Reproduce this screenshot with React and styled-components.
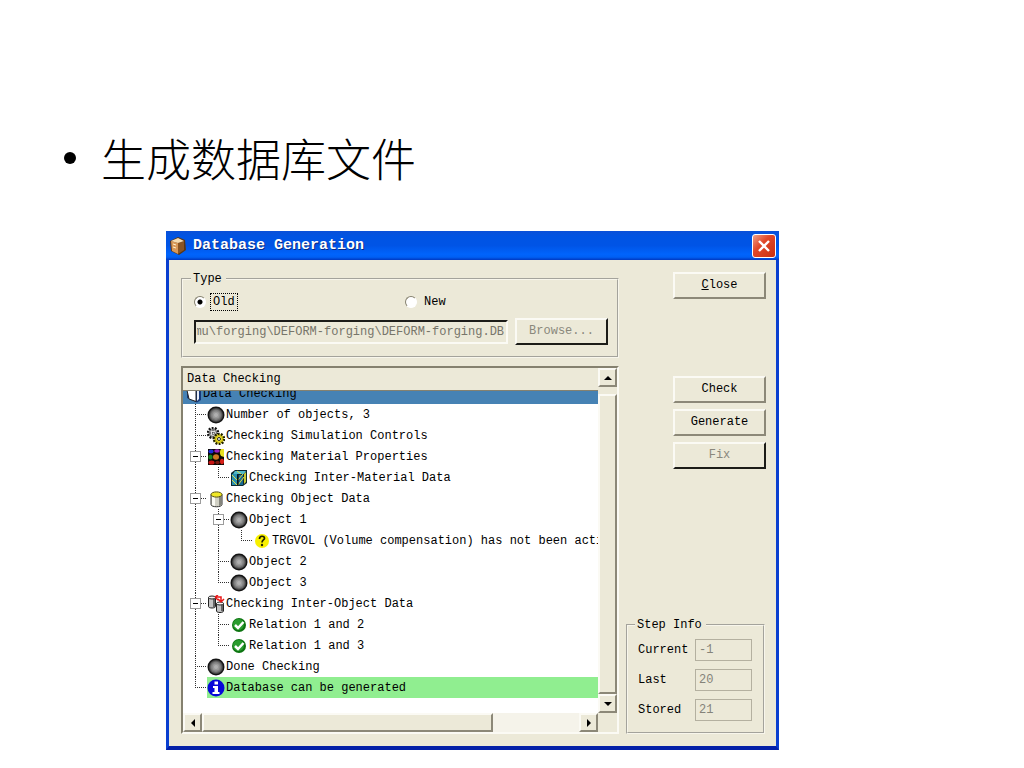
import React, { useLayoutEffect, useRef } from 'react';
import styled, { createGlobalStyle, css } from 'styled-components';

const GlobalStyle = createGlobalStyle`
  * {
    box-sizing: border-box;
  }

  body {
    margin: 0;
    background: #ffffff;
    color: #000000;
    font-family: 'Liberation Mono', 'Noto Sans CJK SC', monospace;
    font-size: 12px;
    line-height: 14px;
  }
`;

const treeRows = [
  { guides: [], icon: 'book', label: 'Data Checking', tone: 'blue' },
  { guides: ['tee'], icon: 'ball', label: 'Number of objects, 3' },
  { guides: ['tee'], icon: 'gears', label: 'Checking Simulation Controls' },
  { guides: ['box'], icon: 'material', label: 'Checking Material Properties' },
  { guides: ['line', 'elbow'], icon: 'interMaterial', label: 'Checking Inter-Material Data' },
  { guides: ['box'], icon: 'cylinder', label: 'Checking Object Data' },
  { guides: ['line', 'box'], icon: 'ball', label: 'Object 1' },
  {
    guides: ['line', 'line', 'elbow'],
    icon: 'question',
    label: 'TRGVOL (Volume compensation) has not been activated',
  },
  { guides: ['line', 'tee'], icon: 'ball', label: 'Object 2' },
  { guides: ['line', 'elbow'], icon: 'ball', label: 'Object 3' },
  { guides: ['box'], icon: 'interObject', label: 'Checking Inter-Object Data' },
  { guides: ['line', 'tee'], icon: 'check', label: 'Relation 1 and 2' },
  { guides: ['line', 'elbow'], icon: 'check', label: 'Relation 1 and 3' },
  { guides: ['tee'], icon: 'ball', label: 'Done Checking' },
  { guides: ['elbow'], icon: 'info', label: 'Database can be generated', tone: 'green' },
];

const stepFields = [
  { id: 'current', label: 'Current', value: '-1' },
  { id: 'last', label: 'Last', value: '20' },
  { id: 'stored', label: 'Stored', value: '21' },
];

const icons = {
  book: (
    <>
      <path d="M3 1h11l3 3v11l-4 2.500L3 13z" fill="#16387a" />
      <path d="M2 1h10v15.500L5 14z" fill="#ffffff" stroke="#222222" />
      <path d="M13 3l2 2v9l-2 2z" fill="#e8eef8" />
    </>
  ),
  ball: (
    <>
      <circle cx="9" cy="9" r="8.5" fill="#141414" />
      <circle cx="9" cy="9" r="7" fill="#484848" />
      <circle cx="9" cy="9" r="6" fill="#686868" />
      <circle cx="9" cy="9" r="5" fill="#828282" />
      <circle cx="9" cy="9" r="3.5" fill="#9a9a9a" />
      <circle cx="9" cy="9" r="2" fill="#b0b0b0" />
    </>
  ),
  gears: (
    <>
      <circle cx="6" cy="6" r="5" fill="#c8c8c8" stroke="#111111" strokeWidth="2.6" strokeDasharray="1.8 1.3" />
      <circle cx="6" cy="6" r="3.5" fill="#e0e0e0" stroke="#666666" />
      <path d="M6 3v6M3 6h6" stroke="#222222" strokeDasharray="1 1" />
      <circle cx="12" cy="12" r="5" fill="#f0e020" stroke="#222200" strokeWidth="2.6" strokeDasharray="1.8 1.3" />
      <circle cx="12" cy="12" r="3.5" fill="#f3e62a" stroke="#b8ac14" />
      <circle cx="12" cy="12" r="1.5" fill="#ffffff" stroke="#222222" />
    </>
  ),
  material: (
    <>
      <path d="M1 1h16v16H1z" fill="#0c0804" />
      <ellipse cx="4" cy="3.5" rx="2.6" ry="2" fill="#1a30d8" />
      <ellipse cx="10" cy="3" rx="2.8" ry="1.800" fill="#9820c0" />
      <path d="M14 1h3v8l-3-1c-1.500-2-1.500-5 0-7z" fill="#e8e020" />
      <ellipse cx="3.500" cy="9" rx="2.200" ry="2.600" fill="#188820" />
      <ellipse cx="9" cy="9" rx="3" ry="2.800" fill="#d07820" />
      <ellipse cx="4.500" cy="14.500" rx="3" ry="2" fill="#c81414" />
      <ellipse cx="10.500" cy="14.500" rx="2.200" ry="1.800" fill="#7c1810" />
      <ellipse cx="15" cy="13.500" rx="2" ry="2.800" fill="#d82018" />
    </>
  ),
  interMaterial: (
    <>
      <path d="M1 4l4-3h12v13l-4 3H1z" fill="#0c2830" />
      <path d="M2 5h5v11H2z" fill="#2890b0" />
      <path d="M5 2h11l-2 3H3z" fill="#50b8c8" />
      <path d="M8 6h5v10H8z" fill="#186890" />
      <path d="M14 5l2-2v10l-2 2z" fill="#c8c830" />
      <path d="M2 6l5 5M2 11l5 5M8 16l6-8M8 11l5-6M7 2l4 3" stroke="#e0dc40" fill="none" />
      <path d="M8 6v10" stroke="#000000" />
    </>
  ),
  cylinder: (
    <>
      <path d="M4 4.500v10c0 3 11 3 11 0v-10z" fill="#d0d0c4" stroke="#333333" />
      <path d="M5 6h3v10l-3-1z" fill="#fafaf4" />
      <path d="M12 6h2v9l-2 1z" fill="#85857c" />
      <ellipse cx="9.500" cy="4.500" rx="5.500" ry="2.600" fill="#f0e828" stroke="#55500c" />
    </>
  ),
  question: (
    <>
      <circle cx="9" cy="9" r="7" fill="#f8f000" />
      <path d="M6.500 7c0-3.500 5-3.500 5-.8C11.500 8 9 8 9 10.500" stroke="#222200" strokeWidth="1.7" fill="none" />
      <circle cx="9" cy="13" r="1.200" fill="#222200" />
    </>
  ),
  interObject: (
    <>
      <path d="M1.500 2.500v9c0 2 7 2 7 0v-9z" fill="#c4c4c4" stroke="#222222" />
      <path d="M6 4h2v8H6z" fill="#666666" />
      <ellipse cx="5" cy="2.500" rx="3.500" ry="1.500" fill="#f4f4f4" stroke="#222222" />
      <path d="M9.500 8.500v7.500c0 2 7 2 7 0V8.500z" fill="#c4c4c4" stroke="#222222" />
      <path d="M14 10h2v6h-2z" fill="#666666" />
      <ellipse cx="13" cy="8.500" rx="3.500" ry="1.500" fill="#f4f4f4" stroke="#222222" />
      <path d="M8 2h6v4M8 2l3-2M8 2l3 3M14 7l-3-3M14 7l3-3" stroke="#e81818" strokeWidth="1.500" fill="none" />
    </>
  ),
  check: (
    <>
      <circle cx="9" cy="9" r="7" fill="#0c7410" />
      <circle cx="8.500" cy="8.500" r="5.500" fill="#2a9c2e" />
      <path d="M5 9l3 3 5.500-6" stroke="#ffffff" strokeWidth="2.500" fill="none" />
    </>
  ),
  info: (
    <>
      <circle cx="9" cy="9" r="8.500" fill="#0808d8" />
      <path d="M7.500 2.500h3.500v3H7.500zM6 7h5v6h1.500v2h-7v-2H7.500V9H6z" fill="#ffffff" />
    </>
  ),
};

const guideLines = {
  line: 'M11.5 0V21',
  tee: 'M11.5 0V21M11 10.5H23',
  box: 'M11.5 0V21M17 10.5H23',
  elbow: 'M11.5 0V11M11 10.5H23',
};

const Guide = ({ kind }) => (
  <GuideSvg viewBox="0 0 23 21" aria-hidden="true">
    <path d={guideLines[kind]} stroke="#303030" strokeDasharray="1 1" fill="none" />
    {kind === 'box' && (
      <>
        <rect x="6.5" y="5.5" width="10" height="10" fill="#ffffff" stroke="#9c9c9c" />
        <path d="M9 10.5h5" stroke="#000000" />
      </>
    )}
  </GuideSvg>
);

const Arrow = ({ direction }) => {
  const shapes = {
    up: 'M0 6h8L4 2z',
    down: 'M0 2h8L4 6z',
    left: 'M6 0v8L2 4z',
    right: 'M2 0v8l4-4z',
  };
  return (
    <svg width="8" height="8" viewBox="0 0 8 8" aria-hidden="true">
      <path d={shapes[direction]} fill="#000000" />
    </svg>
  );
};

const App = () => {
  const pathRef = useRef(null);

  // keep the file name at the end of the path in view
  useLayoutEffect(() => {
    pathRef.current.scrollLeft = pathRef.current.scrollWidth;
  }, []);

  return (
    <>
      <GlobalStyle />
      <Slide>
        <Bullet>生成数据库文件</Bullet>
        <Dialog role="dialog" aria-labelledby="dialog-title">
          <TitleBar>
            <TitleIcon viewBox="0 0 18 18" aria-hidden="true">
              <path d="M1 4l8-4 7 3 1 10-7 5-8-4z" fill="#5a3614" />
              <path d="M2 4l7 2v11l-6-3z" fill="#d89858" />
              <path d="M9 6l6-2v9l-6 4z" fill="#8a5524" />
              <path d="M2 4l7-3 6 3-6 2z" fill="#f6dcb0" />
              <path d="M4 7l3 1M4 10l3 1" stroke="#fff0cc" />
            </TitleIcon>
            <Title id="dialog-title">Database Generation</Title>
            <TitleClose type="button" aria-label="Close window">
              <svg width="14" height="14" viewBox="0 0 14 14" aria-hidden="true">
                <path d="M2 2l10 10M12 2L2 12" stroke="#ffffff" strokeWidth="2.4" />
              </svg>
            </TitleClose>
          </TitleBar>

          <Client>
            <MainColumn>
              <Group>
                <Legend>Type</Legend>
                <RadioRow>
                  <RadioLabel>
                    <Radio type="radio" name="type" defaultChecked />
                    <RadioText $focused>Old</RadioText>
                  </RadioLabel>
                  <RadioLabel>
                    <Radio type="radio" name="type" />
                    <RadioText>New</RadioText>
                  </RadioLabel>
                </RadioRow>
                <PathRow>
                  <PathInput
                    ref={pathRef}
                    aria-label="Database path"
                    defaultValue="simu\forging\DEFORM-forging\DEFORM-forging.DB"
                    disabled
                  />
                  <Button type="button" disabled>Browse...</Button>
                </PathRow>
              </Group>

              <TreeFrame>
                <TreePane>
                  <TreeHeader>Data Checking</TreeHeader>
                  <TreeBody>
                    <TreeList>
                      {treeRows.map((row) => (
                        <TreeRow key={row.label} $tone={row.guides.length ? undefined : row.tone}>
                          {row.guides.map((kind, i) => (
                            <Guide key={i} kind={kind} />
                          ))}
                          <TreeItem $tone={row.tone}>
                            <ItemIcon viewBox="0 0 18 18" aria-hidden="true">{icons[row.icon]}</ItemIcon>
                            {row.label}
                          </TreeItem>
                        </TreeRow>
                      ))}
                    </TreeList>
                  </TreeBody>
                  <HorizontalBar>
                    <ScrollButton type="button" aria-label="Scroll left"><Arrow direction="left" /></ScrollButton>
                    <HorizontalThumb />
                    <ScrollButton type="button" aria-label="Scroll right"><Arrow direction="right" /></ScrollButton>
                  </HorizontalBar>
                </TreePane>
                <VerticalBar>
                  <ScrollButton type="button" aria-label="Scroll up"><Arrow direction="up" /></ScrollButton>
                  <VerticalThumb />
                  <ScrollButton type="button" aria-label="Scroll down"><Arrow direction="down" /></ScrollButton>
                </VerticalBar>
              </TreeFrame>
            </MainColumn>

            <SideColumn>
              <Button type="button"><u>C</u>lose</Button>
              <Actions>
                <Button type="button">Check</Button>
                <Button type="button">Generate</Button>
                <Button type="button" disabled>Fix</Button>
              </Actions>
              <StepGroup>
                <Legend>Step Info</Legend>
                <StepGrid>
                  {stepFields.map((field) => (
                    <React.Fragment key={field.id}>
                      <label htmlFor={field.id}>{field.label}</label>
                      <StepInput id={field.id} defaultValue={field.value} disabled />
                    </React.Fragment>
                  ))}
                </StepGrid>
              </StepGroup>
            </SideColumn>
          </Client>
        </Dialog>
      </Slide>
    </>
  );
};

const raised = css`
  border: 2px solid;
  border-color: #fbfaf4 #8c8878 #8c8878 #fbfaf4;
  background: #ece9d8;
`;

const Slide = styled.main`
  padding: 128px 245px 18px 166px;
`;

const Bullet = styled.h1`
  display: flex;
  align-items: center;
  gap: 25px;
  margin: 0 0 43px -102px;
  font-family: 'Noto Sans CJK SC', sans-serif;
  font-size: 45px;
  font-weight: 300;
  line-height: 60px;
  white-space: nowrap;

  &::before {
    content: '';
    width: 12px;
    height: 12px;
    border-radius: 50%;
    background: #000000;
  }
`;

const Dialog = styled.section`
  border: solid #0a3fd0;
  border-width: 0 3px 4px;
  border-bottom-color: #0420a8;
  background: #ece9d8;
`;

const TitleBar = styled.header`
  display: flex;
  align-items: center;
  gap: 6px;
  height: 29px;
  margin: 0 -3px;
  padding: 0 3px;
  background: linear-gradient(#0a50d8, #0054e3 20%, #0054e6 50%, #0064fc 80%, #0060f4 90%, #0038c0);
`;

const TitleIcon = styled.svg`
  width: 18px;
  height: 18px;
`;

const Title = styled.h2`
  flex: 1;
  margin: 0;
  color: #ffffff;
  font-size: 15px;
  font-weight: 700;
  line-height: 18px;
  text-shadow: 1px 1px 0 #0a2a80;
`;

const TitleClose = styled.button`
  display: flex;
  align-items: center;
  justify-content: center;
  width: 24px;
  height: 24px;
  padding: 0;
  border: 1px solid #ffffff;
  border-radius: 3px;
  background: linear-gradient(135deg, #f0a088, #e0482a 40%, #c83010);
`;

const Client = styled.div`
  display: flex;
  gap: 7px;
  padding: 12px 10px 12px 12px;
`;

const MainColumn = styled.div`
  display: flex;
  flex: 1;
  flex-direction: column;
  gap: 8px;
  min-width: 0;
`;

const SideColumn = styled.div`
  display: flex;
  flex-direction: column;
  align-items: flex-end;
  width: 140px;
`;

const Group = styled.fieldset`
  min-width: 0;
  margin: 0;
  padding: 7px 9px 11px 11px;
  border: 2px groove #f8f6ec;
`;

const StepGroup = styled(Group)`
  align-self: stretch;
  margin: auto 1px 0 0;
  padding: 7px 11px 11px 10px;
`;

const Legend = styled.legend`
  margin-left: -3px;
  padding: 0 4px 0 2px;
`;

const RadioRow = styled.div`
  display: grid;
  grid-template-columns: 1fr 1fr;
  gap: 8px;
`;

const RadioLabel = styled.label`
  display: flex;
  align-items: center;
  gap: 4px;
`;

const Radio = styled.input`
  appearance: none;
  width: 12px;
  height: 12px;
  margin: 0;
  border: 1px solid;
  border-color: #85816f #ffffff #ffffff #85816f;
  border-radius: 50%;
  background: #ffffff;

  &:checked {
    background: radial-gradient(circle, #000000 2px, #ffffff 3px);
  }
`;

const RadioText = styled.span`
  padding: 1px 2px;
  border: 1px dotted ${props => (props.$focused ? '#000000' : 'transparent')};
`;

const PathRow = styled.div`
  display: flex;
  align-items: center;
  gap: 7px;
  margin-top: 7px;
`;

const PathInput = styled.input`
  flex: 1;
  min-width: 0;
  height: 24px;
  padding: 0 2px 0 1px;
  border: 2px solid;
  border-color: #1c1c18 #fbfaf4 #fbfaf4 #1c1c18;
  background: #ece9d8;
  color: #77756a;
  font: inherit;
`;

const Button = styled.button`
  ${raised}
  width: 93px;
  height: 27px;
  padding: 0 0 2px;
  color: #000000;
  font: inherit;

  &:disabled {
    border-color: #fbfaf4 #1c1c18 #1c1c18 #fbfaf4;
    color: #8a887c;
  }
`;

const Actions = styled.div`
  display: flex;
  flex-direction: column;
  gap: 6px;
  margin-top: 77px;
`;

const StepGrid = styled.div`
  display: grid;
  grid-template-columns: 57px 1fr;
  row-gap: 8px;
  align-items: center;
`;

const StepInput = styled.input`
  width: 100%;
  min-width: 0;
  height: 22px;
  padding: 0 3px;
  border: 1px solid #b4b0a0;
  background: #ece9d8;
  color: #85837a;
  font: inherit;
`;

const TreeFrame = styled.div`
  display: flex;
  border: 2px solid;
  border-color: #85816f #fbfaf4 #fbfaf4 #85816f;
`;

const TreePane = styled.div`
  flex: 1;
  min-width: 0;
`;

const TreeHeader = styled.div`
  padding: 4px;
  border-bottom: 1px solid #85816f;
`;

const TreeBody = styled.div`
  padding-bottom: 15px;
  background: #ffffff;
  overflow: hidden;
`;

const TreeList = styled.ul`
  margin: -8px 0 0;
  padding: 0;
  list-style: none;
`;

const tones = {
  blue: '#4682b4',
  green: '#90ee90',
};

const TreeRow = styled.li`
  display: flex;
  height: 21px;
  padding-left: 1px;
  background: ${props => tones[props.$tone] || 'none'};
`;

const TreeItem = styled.span`
  display: flex;
  flex: 1;
  align-items: center;
  gap: 1px;
  min-width: 0;
  background: ${props => tones[props.$tone] || 'none'};
  white-space: nowrap;
`;

const GuideSvg = styled.svg`
  flex: none;
  width: 23px;
  height: 21px;
`;

const ItemIcon = styled.svg`
  flex: none;
  width: 18px;
  height: 18px;
`;

const ScrollButton = styled.button`
  ${raised}
  display: flex;
  flex: none;
  align-items: center;
  justify-content: center;
  width: 19px;
  height: 19px;
  padding: 0;
`;

const HorizontalBar = styled.div`
  display: flex;
  justify-content: space-between;
  background: #f5f3ea;
`;

const HorizontalThumb = styled.div`
  ${raised}
  width: 70%;
  margin-right: auto;
`;

const VerticalBar = styled.div`
  display: flex;
  flex-direction: column;
  width: 19px;
  padding-bottom: 19px;
`;

const VerticalThumb = styled.div`
  ${raised}
  flex: 1;
  margin-top: 7px;
`;

export default App;
